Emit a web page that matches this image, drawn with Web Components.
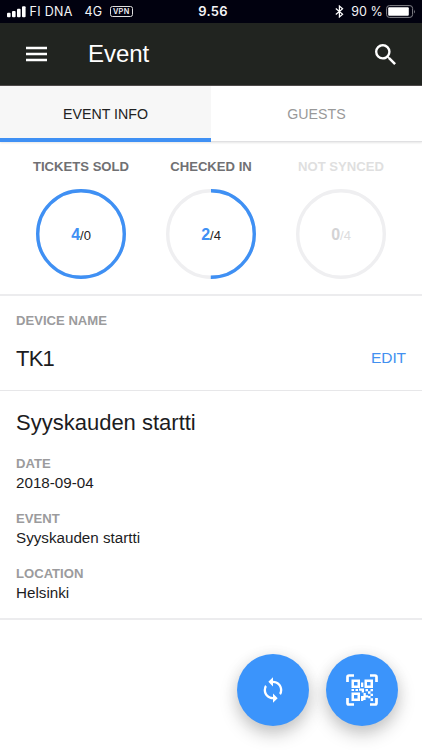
<!DOCTYPE html>
<html lang="fi">
<head>
<meta charset="utf-8">
<title>Event</title>
<style>
html,body{margin:0;height:100%;background:#fff}
body{font-family:"Liberation Sans",Arial,Helvetica,sans-serif;color:#1c1c1e;overflow:hidden}
</style>
</head>
<body>
<event-app></event-app>
<script>
const define = (name, html) => customElements.define(name, class extends HTMLElement {
  constructor() {
    super();
    const t = document.createElement('template');
    t.innerHTML = html;
    this.attachShadow({mode: 'open'}).append(t.content.cloneNode(true));
  }
});

define('status-bar', `
<style>
:host{display:grid;grid-template-columns:1fr auto 1fr;align-items:center;height:23px;background:#01010f;color:#f4f4f6;font:12.5px/23px Inter,sans-serif;white-space:pre}
.l,.r{display:flex;align-items:center}
.l{padding-left:7px}.r{justify-content:flex-end;padding-right:6px}
.carrier{margin-left:3.5px;width:55px;letter-spacing:.3px}
.net{width:25.5px;letter-spacing:.1px}
.vpn{box-sizing:border-box;width:22.5px;height:11px;border:1px solid #ddd;border-radius:2.5px;font:600 7.3px/9px Inter,sans-serif;text-align:center;letter-spacing:.35px}
.time{font-weight:600;font-size:13px;letter-spacing:.3px;padding-left:4px}
.pct{margin:0 3px 0 7px;letter-spacing:.1px}
svg{display:block}
</style>
<div class="l">
<svg width="19" height="12" viewBox="0 0 19 12" fill="#fff"><rect y="6.8" width="3.6" height="4.4" rx="1"/><rect x="5" y="5" width="3.6" height="6.2" rx="1"/><rect x="10" y="2.8" width="3.6" height="8.4" rx="1"/><rect x="15" y=".2" width="3.6" height="11" rx="1"/></svg>
<span class="carrier">FI DNA</span><span class="net">4G</span><span class="vpn">VPN</span></div>
<span class="time">9.56</span>
<div class="r"><svg width="9" height="13" viewBox="0 0 9 13" fill="none" stroke="#fff" stroke-width="1.2"><path d="M.8 3.500 7.600 9.300 4.400 12V1l3.200 2.700L.8 9.500"/></svg>
<span class="pct">90 %</span>
<svg width="30" height="13" viewBox="0 0 30 13"><rect x=".6" y=".6" width="26" height="11.8" rx="2.8" fill="none" stroke="#85858b"/><rect x="2.2" y="2.2" width="20.6" height="8.6" rx="1" fill="#fff"/><path d="M28 4.500q1.600 2 0 4z" fill="#85858b"/></svg></div>`);

define('app-bar', `
<style>
:host{display:flex;align-items:center;box-sizing:border-box;height:63px;padding:0 26px;background:#212420;color:#fff;border-bottom:1px solid #4f4b4b}
.title{flex:1;font-size:24px;line-height:28px;margin-left:41px;letter-spacing:-.05px}
svg{display:block}
</style>
<svg width="21" height="16" viewBox="0 0 21 16" fill="#fff"><path d="M0 .8h21v2.400H0zM0 6.800h21v2.400H0zM0 12.800h21v2.400H0z"/></svg>
<span class="title"><slot></slot></span>
<svg width="21" height="21" viewBox="3 3 17.5 17.5" fill="#fff"><path d="M15.5 14h-.79l-.28-.27A6.471 6.471 0 0 0 16 9.5 6.5 6.5 0 1 0 9.5 16c1.61 0 3.09-.59 4.23-1.57l.27.28v.79l5 4.99L20.49 19l-4.99-5zm-6 0C7.01 14 5 11.99 5 9.5S7.01 5 9.5 5 14 7.01 14 9.5 11.99 14 9.5 14z"/></svg>`);

define('tab-item', `
<style>
:host{flex:1;box-sizing:border-box;height:56px;display:flex;justify-content:center;font-size:14.2px;line-height:57px;color:#999;border-bottom:1px solid #e0e0e2}
:host([selected]){background:#f7f7f7;color:#222;border-bottom:4px solid #3f90f4}
</style><slot></slot>`);

define('tab-strip', `
<style>:host{display:flex;height:56px;box-shadow:0 1px 2px rgba(0,0,0,.1)}</style><slot></slot>`);

customElements.define('stat-ring', class extends HTMLElement {
  constructor() {
    super();
    const [n, total, part] = ['value', 'total', 'part'].map(a => this.getAttribute(a));
    const c = 2 * Math.PI * 43.3;
    this.attachShadow({mode: 'open'}).innerHTML = `
<style>
:host{display:flex;flex-direction:column;align-items:center;width:130px;color:#707073}
:host([idle]){color:#dfdfe0}
.label{font:bold 13.1px/16px "Liberation Sans",Arial,sans-serif;white-space:nowrap}
.dial{display:grid;place-items:center;margin-top:14px}
svg,.n{grid-area:1/1}
svg{display:block;transform:rotate(-90deg)}
.n{font-size:13px;line-height:18px;color:#222;display:flex;align-items:baseline;padding-top:2px}
b{font-size:16px;color:#3f90f4}
:host([idle]) .n{color:#dcdcdd}:host([idle]) b{color:#d3d3d5}
</style>
<span class="label"><slot></slot></span>
<div class="dial"><svg width="90" height="90" fill="none" stroke-width="3.4"><circle cx="45" cy="45" r="43.3" stroke="#efeff1"/>${+part ? `<circle cx="45" cy="45" r="43.3" stroke="#3f90f4" stroke-dasharray="${c * part} ${c}"/>` : ''}</svg>
<span class="n"><b>${n}</b><span>/${total}</span></span></div>`;
  }
});

define('stat-row', `
<style>:host{display:flex;box-sizing:border-box;height:154px;padding:17px 0 0 16px;border-bottom:2px solid #ececee}</style><slot></slot>`);

define('field-label', `
<style>:host{display:block;font-weight:bold;font-size:13.1px;line-height:16px;color:#9b9b9d}</style><slot></slot>`);

define('device-card', `
<style>
:host{display:block;box-sizing:border-box;height:95px;padding:17px 16px 0;border-bottom:1.5px solid #e7e7e9}
.row{display:flex;justify-content:space-between;align-items:center;margin-top:16px;line-height:28px}
.name{font-size:22px;letter-spacing:-.8px}.edit{font-size:15.5px;color:#4290f0;line-height:26px;padding-bottom:2px;letter-spacing:-.1px}
</style>
<field-label>DEVICE NAME</field-label>
<div class="row"><span class="name"><slot></slot></span><span class="edit">EDIT</span></div>`);

define('info-field', `
<style>:host{display:block;height:55px;font-size:15.2px}.v{line-height:20px;margin-top:1px}</style>
<field-label><slot name="label"></slot></field-label><div class="v"><slot></slot></div>`);

define('event-card', `
<style>
:host{display:block;box-sizing:border-box;height:229px;padding:18px 16px 0;border-bottom:2px solid #ececee}
h2{margin:0 0 19px;font-weight:400;font-size:22px;line-height:28px}
</style>
<h2><slot name="title"></slot></h2><slot></slot>`);

define('round-button', `
<style>
:host{display:grid;place-items:center;width:72px;height:72px;border-radius:50%;background:#3b94fb;box-shadow:0 8px 18px rgba(0,0,0,.22),0 2px 16px rgba(0,0,0,.06)}
</style><slot></slot>`);

define('event-app', `
<style>
:host{display:block;position:relative;width:422px;height:750px;overflow:hidden;background:#fff}
.fabs{position:absolute;right:24px;bottom:24px;display:flex;gap:17px}
svg{display:block}
</style>
<status-bar></status-bar>
<app-bar>Event</app-bar>
<tab-strip><tab-item selected>EVENT INFO</tab-item><tab-item>GUESTS</tab-item></tab-strip>
<stat-row>
<stat-ring value="4" total="0" part="1">TICKETS SOLD</stat-ring>
<stat-ring value="2" total="4" part=".5">CHECKED IN</stat-ring>
<stat-ring value="0" total="4" part="0" idle>NOT SYNCED</stat-ring>
</stat-row>
<device-card>TK1</device-card>
<event-card><span slot="title">Syyskauden startti</span>
<info-field><span slot="label">DATE</span>2018-09-04</info-field>
<info-field><span slot="label">EVENT</span>Syyskauden startti</info-field>
<info-field><span slot="label">LOCATION</span>Helsinki</info-field>
</event-card>
<div class="fabs">
<round-button><svg width="28" height="28" viewBox="0 0 24 24" fill="#fff"><path d="M12 4V1L8 5l4 4V6c3.31 0 6 2.69 6 6 0 1.01-.25 1.97-.7 2.8l1.46 1.46A7.93 7.93 0 0 0 20 12c0-4.42-3.58-8-8-8zm0 14c-3.31 0-6-2.69-6-6 0-1.01.25-1.97.7-2.8L5.24 7.74A7.93 7.93 0 0 0 4 12c0 4.42 3.58 8 8 8v3l4-4-4-4v3z"/></svg></round-button>
<round-button><svg width="32" height="32" viewBox="0 0 32 32" fill="#fff">
<path d="M1.500 8V3q0-1.500 1.500-1.500H8M24 1.500h5q1.500 0 1.500 1.500v5M30.500 24v5q0 1.500-1.500 1.500h-5M8 30.500H3q-1.500 0-1.500-1.500v-5" fill="none" stroke="#fff" stroke-width="2.7"/>
<path fill-rule="evenodd" d="M5.500 5.500H14V14H5.500zM8 8v3.500h3.500V8zM18.500 5.500H27V14h-8.500zM21 8v3.500h3.500V8zM5.500 18.500H14V27H5.500zM8 21v3.500h3.500V21z"/>
<path d="M15 8.500h2.300v4.500H15zM5.500 15H8v2H5.500zM9.500 15H12v2H9.500zM13 14.500h5v4h-2.300v-1.800H13zM19.500 15H22v2.300h-2.500zM24.500 15H27v2.300h-2.500zM22 17.300h2.500v2.500H22zM17.500 19h2.300v2.200h2.300v2.300h-2.500V26h-2.300v1H15v-5h2.500zM24.500 19.700H27V22h-2.500zM22.200 22h2.300v2.300h-2.300zM24.500 24.300H27V27h-2.500z"/>
</svg></round-button>
</div>`);
</script>
</body>
</html>
